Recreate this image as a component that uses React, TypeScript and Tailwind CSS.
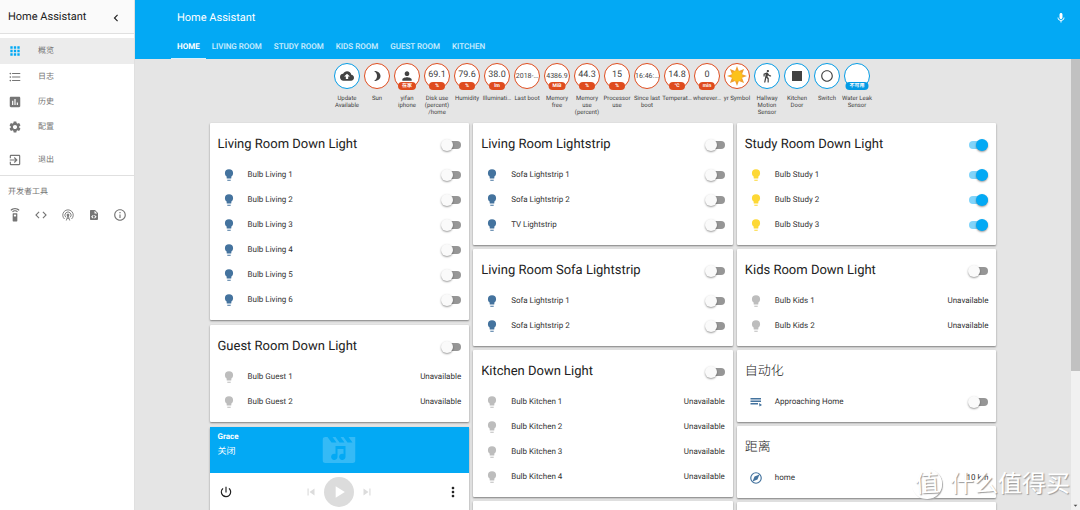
import { useState } from "react";
import {
  MdApps, MdFormatListBulleted, MdInsertChart, MdSettings, MdExitToApp, MdSettingsRemote, MdCode,
  MdInfoOutline, MdChevronLeft, MdMic, MdCloudUpload, MdPerson, MdDirectionsWalk, MdStop,
  MdRadioButtonUnchecked, MdPowerSettingsNew, MdSkipPrevious, MdSkipNext, MdPlayArrow, MdMoreVert,
  MdArrowDropDown,
} from "react-icons/md";

function Path({ d, className }: { d: string; className: string }) {
  return (
    <svg viewBox="0 0 24 24" className={className} fill="currentColor" aria-hidden="true">
      <path d={d} />
    </svg>
  );
}

const BULB = "M12,2A7,7 0 0,0 5,9C5,11.38 6.19,13.47 8,14.74V17A1,1 0 0,0 9,18H15A1,1 0 0,0 16,17V14.74C17.81,13.47 19,11.38 19,9A7,7 0 0,0 12,2M9,21A1,1 0 0,0 10,22H14A1,1 0 0,0 15,21V20H9V21Z";
const FILE_CODE = "M13,9H18.5L13,3.5V9M6,2H14L20,8V20A2,2 0 0,1 18,22H6C4.89,22 4,21.1 4,20V4C4,2.89 4.89,2 6,2M6.12,15.5L9.86,19.24L11.28,17.83L8.95,15.5L11.28,13.17L9.86,11.76L6.12,15.5M17.28,15.5L13.54,11.76L12.12,13.17L14.45,15.5L12.12,17.83L13.54,19.24L17.28,15.5Z";
const COMPASS = "M6,18L9.500,9.500L18,6L14.500,14.500L6,18M12,2A10,10 0 0,1 22,12A10,10 0 0,1 12,22A10,10 0 0,1 2,12A10,10 0 0,1 12,2M12,4A8,8 0 0,0 4,12A8,8 0 0,0 12,20A8,8 0 0,0 20,12A8,8 0 0,0 12,4Z";
const MOON = "M6 2C14 1.500 19 6.500 19 12S14 22.500 6 22C10 19.500 12 16 12 12S10 4.500 6 2Z";
const AUTOMATION = "M1 4H22V7H1ZM1 9H22V12H1ZM1 14H16V17H1ZM18 14L24 18L19 21Z";

function Podcast() {
  return (
    <svg viewBox="0 0 24 24" className="size-3" fill="none" stroke="currentColor" strokeWidth="1.8" aria-hidden="true">
      <path d="M5 20A10.500 10.500 0 1 1 19 20M7.500 16.500A6.200 6.200 0 1 1 16.500 16.500" />
      <circle cx="12" cy="12" r="2" fill="currentColor" />
      <path d="M12 13L8.500 23M12 13L15.500 23M10.500 19H13.500" />
    </svg>
  );
}

function SunSymbol() {
  return (
    <svg viewBox="0 0 24 24" className="size-5" aria-hidden="true">
      <path fill="#f0a030" d="M12 0L14.200 6L20.500 3.500L18 9.800L24 12L18 14.200L20.500 20.500L14.200 18L12 24L9.800 18L3.500 20.500L6 14.200L0 12L6 9.800L3.500 3.500L9.800 6Z" />
      <circle cx="12" cy="12" r="6.500" fill="#fcc21b" />
    </svg>
  );
}

const NAV = [
  { label: "概览", icon: <MdApps className="size-3.5 text-[#03a9f4]" />, active: true },
  { label: "日志", icon: <MdFormatListBulleted className="size-3.5" /> },
  { label: "历史", icon: <MdInsertChart className="size-3.5" /> },
  { label: "配置", icon: <MdSettings className="size-3.5" /> },
];

function Sidebar() {
  return (
    <aside className="flex w-[135px] shrink-0 flex-col border-r border-[#e0e0e0] bg-white text-[#757575]">
      <div className="flex h-[34px] shrink-0 items-center justify-between border-b border-[#e0e0e0] bg-[#fafafa] pt-0.5 pr-2.5 pl-2 text-[#212121]">
        <span className="text-[11px]">Home Assistant</span>
        <button aria-label="收起" className="flex size-4 items-center justify-center">
          <MdChevronLeft className="size-3.5" />
        </button>
      </div>
      <nav className="flex flex-col pt-1 text-[8px]">
        {NAV.map((n) => (
          <a key={n.label} href="#" className={n.active ? "flex h-[26px] items-center gap-4 bg-[#ececec] pl-2" : "flex h-[25px] items-center gap-4 pl-2"}>
            {n.icon}
            <span>{n.label}</span>
          </a>
        ))}
        <a href="#" className="mt-2 flex h-[26px] items-center gap-4 pl-2">
          <MdExitToApp className="size-3.5" />
          <span>退出</span>
        </a>
      </nav>
      <div className="mt-0.5 border-t border-[#e0e0e0] pt-2 pr-[7px] pl-2">
        <div className="text-[8px] leading-4">开发者工具</div>
        <div className="mt-2 flex items-center justify-between">
          <button aria-label="服务" className="flex size-3.5 items-center justify-center"><MdSettingsRemote className="size-3.5" /></button>
          <button aria-label="状态" className="flex size-3.5 items-center justify-center"><MdCode className="size-3.5" /></button>
          <button aria-label="事件" className="flex size-3.5 items-center justify-center"><Podcast /></button>
          <button aria-label="模板" className="flex size-3.5 items-center justify-center"><Path d={FILE_CODE} className="size-3" /></button>
          <button aria-label="信息" className="flex size-3.5 items-center justify-center"><MdInfoOutline className="size-3.5" /></button>
        </div>
      </div>
    </aside>
  );
}

const TABS = ["HOME", "LIVING ROOM", "STUDY ROOM", "KIDS ROOM", "GUEST ROOM", "KITCHEN"];

function Header() {
  return (
    <header className="flex h-[59px] shrink-0 flex-col justify-between bg-[#03a9f4] pr-[13px] pl-9 text-white">
      <div className="flex h-[34px] items-center justify-between pt-0.5 pl-1.5">
        <h1 className="text-[11px]">Home Assistant</h1>
        <button aria-label="语音"><MdMic className="size-3" /></button>
      </div>
      <nav className="flex text-[8px] font-medium">
        {TABS.map((t, i) => (
          <a key={t} href="#" className={i === 0 ? "flex h-[25px] items-center border-b border-[#d8f1fd] px-1.5 pt-0.5 font-bold" : "flex h-[25px] items-center border-b border-transparent px-1.5 pt-0.5 text-white/80"}>
            {t}
          </a>
        ))}
      </nav>
    </header>
  );
}

type BadgeData = { value?: React.ReactNode; unit?: string; label: string; blue?: boolean; small?: boolean };

const BADGES: BadgeData[] = [
  { value: <MdCloudUpload className="size-3.5" />, label: "Update Available", blue: true },
  { value: <Path d={MOON} className="size-3" />, label: "Sun" },
  { value: <MdPerson className="size-3.5" />, unit: "在家", label: "yifan iphone" },
  { value: "69.1", unit: "%", label: "Disk use (percent) /home" },
  { value: "79.6", unit: "%", label: "Humidity" },
  { value: "38.0", unit: "lm", label: "Illuminati…" },
  { value: "2018-…", label: "Last boot", small: true },
  { value: "4386.9", unit: "MiB", label: "Memory free", small: true },
  { value: "44.3", unit: "%", label: "Memory use (percent)" },
  { value: "15", unit: "%", label: "Processor use" },
  { value: "16:46:…", label: "Since last boot", small: true },
  { value: "14.8", unit: "°C", label: "Temperat…" },
  { value: "0", unit: "min", label: "wherever…" },
  { value: <SunSymbol />, label: "yr Symbol" },
  { value: <MdDirectionsWalk className="size-3.5" />, label: "Hallway Motion Sensor", blue: true },
  { value: <MdStop className="size-5" />, label: "Kitchen Door", blue: true },
  { value: <MdRadioButtonUnchecked className="size-3.5" />, label: "Switch", blue: true },
  { unit: "不可用", label: "Water Leak Sensor", blue: true },
];

function Badge({ b }: { b: BadgeData }) {
  return (
    <div className="flex w-[30px] flex-col items-center text-center">
      <div className={(b.blue ? "border-[#039be5]" : "border-[#df4c1e]") + " relative flex size-[26px] items-center justify-center rounded-full border bg-white text-[#424242] " + (b.small ? "text-[7px]" : "text-[9px]")}>
        {b.value}
        {b.unit && (
          <span className={(b.blue ? "bg-[#039be5]" : "bg-[#df4c1e]") + " absolute -bottom-0.5 left-1/2 flex h-2 min-w-4 -translate-x-1/2 items-center justify-center rounded px-1 text-[5px] leading-none font-bold whitespace-nowrap text-white"}>
            {b.unit}
          </span>
        )}
      </div>
      <div className="mt-1.5 w-[30px] text-[6px] leading-[7px] text-[#424242]">{b.label}</div>
    </div>
  );
}

function Toggle({ label, on = false }: { label: string; on?: boolean }) {
  const [checked, setChecked] = useState(on);
  return (
    <input
      type="checkbox"
      role="switch"
      aria-label={label}
      checked={checked}
      onChange={() => setChecked(!checked)}
      className="relative h-2 w-[19px] shrink-0 appearance-none rounded-full bg-[#969696] before:absolute before:-top-[2px] before:-left-px before:size-3 before:rounded-full before:bg-[#fafafa] before:shadow-[0_1px_2px_rgba(0,0,0,0.4)] checked:bg-[#81d4fa] checked:before:right-0 checked:before:left-auto checked:before:bg-[#03a9f4]"
    />
  );
}

type Kind = "off" | "on" | "na";

function Row({ icon, name, children }: { icon: React.ReactNode; name: string; children: React.ReactNode }) {
  return (
    <li className="flex h-[25px] items-center">
      <span className="flex w-[22px] justify-center">{icon}</span>
      <span className="ml-2 flex-1">{name}</span>
      {children}
    </li>
  );
}

function Card({ title, toggle, children }: { title: string; toggle?: Kind; children?: React.ReactNode }) {
  return (
    <section className="rounded-[1px] bg-white px-2 pb-2 shadow-[0_1px_2px_rgba(0,0,0,0.45)]">
      <div className="flex h-[39px] items-center justify-between pt-1 text-[#212121]">
        <h2 className={toggle ? "text-[13px]" : "text-[13px] font-light"}>{title}</h2>
        {toggle && <Toggle label={title} on={toggle === "on"} />}
      </div>
      <ul className="text-[8px] text-[#333333]">{children}</ul>
    </section>
  );
}

function LightCard({ title, kind, names }: { title: string; kind: Kind; names: string[] }) {
  const color = kind === "on" ? "size-3.5 text-[#fdd835]" : kind === "off" ? "size-3.5 text-[#44739e]" : "size-3.5 text-[#bdbdbd]";
  return (
    <Card title={title} toggle={kind}>
      {names.map((n) => (
        <Row key={n} name={n} icon={<Path d={BULB} className={color} />}>
          {kind === "na" ? <span>Unavailable</span> : <Toggle label={n} on={kind === "on"} />}
        </Row>
      ))}
    </Card>
  );
}

function MediaCard() {
  return (
    <section className="rounded-[1px] bg-white shadow-[0_1px_2px_rgba(0,0,0,0.45)]">
      <div className="relative h-[46px] bg-[#03a9f4] px-2 pt-1 text-white">
        <div className="text-[8px] leading-3 font-bold">Grace</div>
        <div className="pt-px text-[9px] leading-4">关闭</div>
        <svg viewBox="0 0 33 26" className="absolute top-[10px] left-1/2 h-[26px] w-[33px] -translate-x-1/2" aria-hidden="true">
          <path fill="#35baf6" fillRule="evenodd" d="M3 0H5L9 5.500H14L10 0H13L17 5.500H22L18 0H21L25 5.500H30L26 0H33V23Q33 26 30 26H3Q0 26 0 23V3Q0 0 3 0ZM13 9V16.900A3.200 3.200 0 1 0 15 20V12H21V16.900A3.200 3.200 0 1 0 23 20V9Z" />
        </svg>
      </div>
      <div className="flex h-[38px] items-center justify-between px-2 text-[#212121]">
        <button aria-label="电源" className="flex w-4 justify-center"><MdPowerSettingsNew className="size-3.5" /></button>
        <div className="flex items-center gap-1.5 text-[#dcdcdc]">
          <button aria-label="上一首"><MdSkipPrevious className="size-3.5" /></button>
          <button aria-label="播放" className="flex size-[30px] items-center justify-center rounded-full bg-[#dcdcdc] text-white">
            <MdPlayArrow className="size-5" />
          </button>
          <button aria-label="下一首"><MdSkipNext className="size-3.5" /></button>
        </div>
        <button aria-label="更多" className="flex w-4 justify-center"><MdMoreVert className="size-4" /></button>
      </div>
    </section>
  );
}

export default function App() {
  return (
    <div className="relative flex h-screen overflow-hidden bg-[#e5e5e5] font-[Roboto,'Noto_Sans_CJK_SC',sans-serif] [text-rendering:geometricPrecision]">
      <Sidebar />
      <div className="flex min-w-0 flex-1 flex-col">
        <Header />
        <div className="flex min-h-0 flex-1">
          <main className="min-w-0 flex-1 overflow-hidden">
            <div className="flex h-16 justify-center pt-1 pr-0.5">
              {BADGES.map((b) => <Badge key={b.label} b={b} />)}
            </div>
            <div className="mx-auto grid max-w-[787px] grid-cols-3 items-start gap-1">
              <div className="flex flex-col gap-[5px]">
                <LightCard title="Living Room Down Light" kind="off" names={["Bulb Living 1", "Bulb Living 2", "Bulb Living 3", "Bulb Living 4", "Bulb Living 5", "Bulb Living 6"]} />
                <LightCard title="Guest Room Down Light" kind="na" names={["Bulb Guest 1", "Bulb Guest 2"]} />
                <MediaCard />
              </div>
              <div className="flex flex-col gap-1">
                <LightCard title="Living Room Lightstrip" kind="off" names={["Sofa Lightstrip 1", "Sofa Lightstrip 2", "TV Lightstrip"]} />
                <LightCard title="Living Room Sofa Lightstrip" kind="off" names={["Sofa Lightstrip 1", "Sofa Lightstrip 2"]} />
                <LightCard title="Kitchen Down Light" kind="na" names={["Bulb Kitchen 1", "Bulb Kitchen 2", "Bulb Kitchen 3", "Bulb Kitchen 4"]} />
                <Card title="" />
              </div>
              <div className="flex flex-col gap-1">
                <LightCard title="Study Room Down Light" kind="on" names={["Bulb Study 1", "Bulb Study 2", "Bulb Study 3"]} />
                <LightCard title="Kids Room Down Light" kind="na" names={["Bulb Kids 1", "Bulb Kids 2"]} />
                <Card title="自动化">
                  <Row name="Approaching Home" icon={<Path d={AUTOMATION} className="size-3 text-[#44739e]" />}>
                    <Toggle label="Approaching Home" />
                  </Row>
                </Card>
                <Card title="距离">
                  <Row name="home" icon={<Path d={COMPASS} className="size-3.5 text-[#44739e]" />}>
                    <span>10 km</span>
                  </Row>
                </Card>
                <Card title="" />
              </div>
            </div>
          </main>
          <div className="flex w-[9px] flex-col justify-between bg-[#f1f1f1]">
            <div className="h-[312px] bg-[#c1c1c1]" />
            <MdArrowDropDown className="size-[9px] text-[#505050]" />
          </div>
        </div>
      </div>
      <div className="pointer-events-none absolute right-2.5 bottom-2.5 flex items-center gap-2 text-white [text-shadow:1px_1px_1px_#999]">
        <span className="flex size-[30px] -rotate-3 items-center justify-center rounded-full border border-white text-[24px] leading-none shadow-[1px_1px_1px_#aaa]">值</span>
        <span className="text-[24px] leading-8">什么值得买</span>
      </div>
    </div>
  );
}
